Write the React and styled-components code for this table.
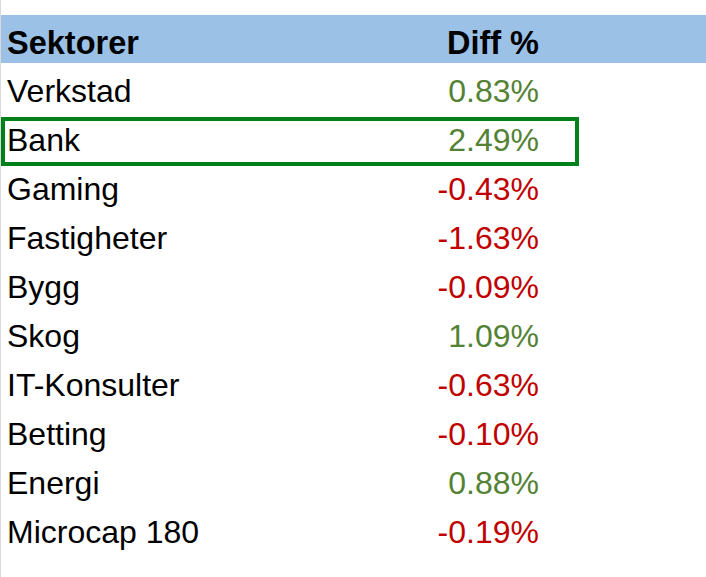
import React from "react";
import styled, { createGlobalStyle } from "styled-components";

const Global = createGlobalStyle`
  html, body { margin: 0; padding: 0; background: #ffffff; }
  body { font-family: "Liberation Sans", Arial, sans-serif; }
`;

const Sheet = styled.div`
  box-sizing: border-box;
  width: 706px;
  height: 577px;
  padding-top: 15px;
  border-left: 1px solid #d9d9d9;
  overflow: hidden;
`;

const Row = styled.div`
  position: relative;
  box-sizing: border-box;
  display: grid;
  grid-template-columns: 400px 138px 1fr;
  align-items: center;
  height: ${(p) => (p.$header ? 48 : 49)}px;
  padding-top: 8px;
  background: ${(p) => (p.$header ? "#9bc2e6" : "transparent")};
  font-size: ${(p) => (p.$header ? 32.5 : 32)}px;
  font-weight: ${(p) => (p.$header ? 700 : 400)};
  color: #000;
  white-space: nowrap;

  ${(p) =>
    p.$highlight &&
    `
    &::after {
      content: "";
      position: absolute;
      left: 0;
      top: 5px;
      width: 578px;
      height: 49px;
      box-sizing: border-box;
      border: 4px solid #00801a;
      pointer-events: none;
    }
  `}
`;

const Name = styled.div`
  padding-left: 6px;
`;

const Value = styled.div`
  text-align: right;
  color: ${(p) =>
    p.$tone === "pos" ? "#548235" : p.$tone === "neg" ? "#c00000" : "#000"};
`;

const rows = [
  ["Verkstad", "0.83%"],
  ["Bank", "2.49%", true],
  ["Gaming", "-0.43%"],
  ["Fastigheter", "-1.63%"],
  ["Bygg", "-0.09%"],
  ["Skog", "1.09%"],
  ["IT-Konsulter", "-0.63%"],
  ["Betting", "-0.10%"],
  ["Energi", "0.88%"],
  ["Microcap 180", "-0.19%"],
];

export default function App() {
  return (
    <>
      <Global />
      <Sheet>
        <Row $header>
          <Name>Sektorer</Name>
          <Value>Diff %</Value>
          <div />
        </Row>
        {rows.map(([name, val, hl]) => (
          <Row key={name} $highlight={hl}>
            <Name>{name}</Name>
            <Value $tone={val.startsWith("-") ? "neg" : "pos"}>{val}</Value>
            <div />
          </Row>
        ))}
      </Sheet>
    </>
  );
}
